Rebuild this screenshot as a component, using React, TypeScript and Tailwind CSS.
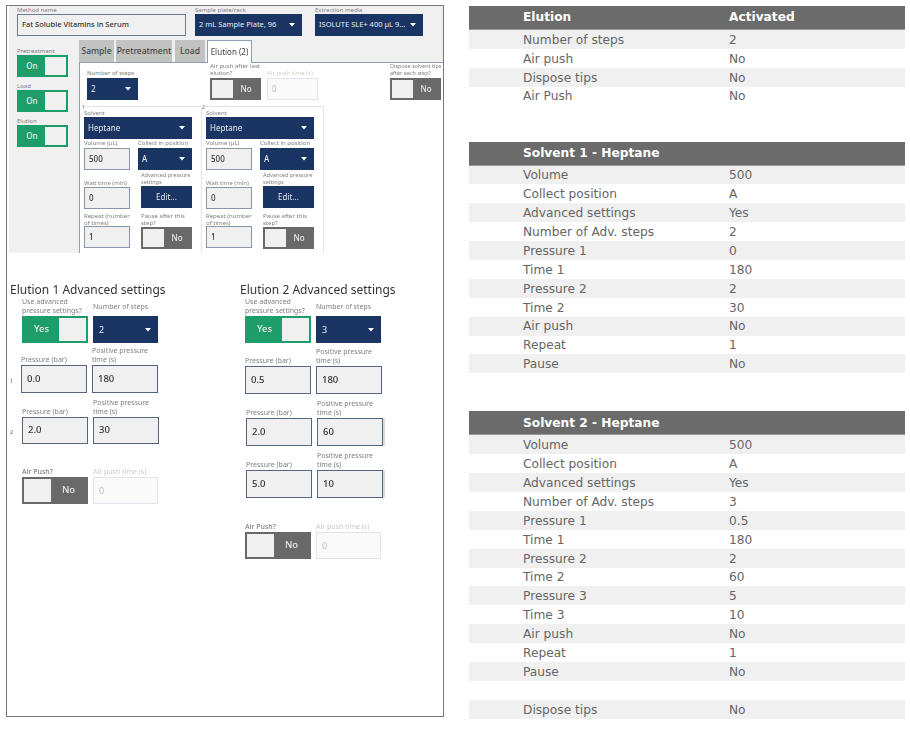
import React from "react";

const Caret = () => (
  <svg width="6" height="4" viewBox="0 0 6 4" className="shrink-0">
    <polygon points="0,0 6,0 3,3.5" fill="#ffffff" />
  </svg>
);

function Label({ children, className = "" }: { children: React.ReactNode; className?: string }) {
  return <div className={"text-[6px] leading-[7px] text-[#808080] " + className}>{children}</div>;
}

function Select({ text, className = "", textClass = "text-[8px]" }: { text: string; className?: string; textClass?: string }) {
  return (
    <div className={"flex items-center justify-between bg-[#1a3563] text-[#e8edf3] pl-[4px] pr-[7px] " + textClass + " " + className}>
      <span className="whitespace-nowrap">{text}</span>
      <Caret />
    </div>
  );
}

function Toggle({ on, text, big = false }: { on: boolean; text: string; big?: boolean }) {
  const size = big ? "w-[66px] h-[27px] p-[2px] text-[9.5px]" : "w-[51px] h-[22px] p-[2px] text-[8px]";
  const knob = big ? "w-[27px] h-[23px]" : "w-[21px] h-[18px]";
  const color = on ? "bg-[#1d9d69] flex-row-reverse" : "bg-[#696969]";
  return (
    <div className={"flex items-center font-medium text-[#e6eeea] " + size + " " + color}>
      <div className={"bg-[#f0f0f0] " + knob} />
      <div className="flex-1 text-center">{text}</div>
    </div>
  );
}

function Input({ value, className = "", size = "text-[8px] pl-[4px] w-[46px] h-[22px] border-[#8796a8]" }: { value: string; className?: string; size?: string }) {
  return (
    <div className={"flex items-center bg-[#f0f0f0] border text-[#333333] font-medium " + size + " " + className}>{value}</div>
  );
}

function Disabled({ big = false }: { big?: boolean }) {
  return (
    <div className={"flex items-center border border-[#dfe5ea] bg-[#fafafa] text-[#bdbdbd] " + (big ? "w-[65px] h-[27px] pl-[5px] text-[9px]" : "w-[51px] h-[22px] pl-[4px] text-[8px]")}>
      0
    </div>
  );
}

function Step({ n, className }: { n: string; className: string }) {
  return (
    <div className={"relative pl-[2px] " + className}>
      <div className="absolute left-0 top-[-3px] text-[5px] leading-[6px] text-[#777777]">{n}</div>
      <Label className="mt-[2px] h-[8px] !leading-[8px]">Solvent</Label>
      <Select text="Heptane" className="w-[108px] h-[22px]" />
      <div className="flex">
        <div className="w-[46px]">
          <Label className="h-[9px] !leading-[8px]">Volume (µL)</Label>
          <Input value="500" />
        </div>
        <div className="ml-[8px] w-[54px]">
          <Label className="h-[9px] !leading-[8px]">Collect in position</Label>
          <Select text="A" className="w-[54px] h-[22px]" textClass="text-[8px] font-medium" />
        </div>
      </div>
      <div className="flex">
        <div className="w-[46px] pt-[9px]">
          <Label className="h-[8px] !leading-[8px]">Wait time (min)</Label>
          <Input value="0" />
        </div>
        <div className="ml-[11px] w-[51px] pt-[2px]">
          <Label className="h-[14px] whitespace-nowrap !text-[5.5px]">Advanced pressure<br />settings</Label>
          <div className="w-[51px] h-[22px] bg-[#1a3563] text-[#dfe5ec] text-[8px] flex items-center justify-center">Edit...</div>
        </div>
      </div>
      <div className="flex">
        <div className="w-[46px] pt-[4px]">
          <Label className="h-[13px] !leading-[6.5px]">Repeat (number of times)</Label>
          <Input value="1" />
        </div>
        <div className="ml-[11px] w-[51px] pt-[4px]">
          <Label className="h-[14px] !leading-[6.5px]">Pause after this step?</Label>
          <Toggle on={false} text="No" />
        </div>
      </div>
    </div>
  );
}

function PressureRow({ n, pressure, time, mt, numW, shade = false, tall = true }: { n: string; pressure: string; time: string; mt: string; numW: string; shade?: boolean; tall?: boolean }) {
  const input = (tall ? "h-[28px] " : "h-[27px] ") + "w-[66px] pl-[5px] text-[9.5px] border-[#54657d]";
  return (
    <div className={"flex items-end " + mt}>
      <div className={"text-[5.5px] leading-[6px] text-[#666666] pb-[9px] " + numW}>{n}</div>
      <div className="w-[66px]">
        <Label className="!text-[7px] !leading-[8px] pb-[1px]">Pressure (bar)</Label>
        <Input value={pressure} size={input} />
      </div>
      <div className="w-[66px] ml-[5px]">
        <Label className="!text-[7px] !leading-[8.5px] w-[66px] whitespace-nowrap pb-[1px]">Positive pressure<br />time (s)</Label>
        <Input value={time} size={input} className={shade ? "shadow-[2px_0_0_#d5dbe3]" : ""} />
      </div>
    </div>
  );
}

function Advanced({ title, steps, rows, airMt, className, left }: { title: string; steps: string; rows: React.ReactNode; airMt: string; className: string; left: string }) {
  return (
    <div className={className}>
      <div className="text-[12px] leading-[16px] text-[#333333] whitespace-nowrap">{title}</div>
      <div className={"flex items-end " + left}>
        <div className="w-[66px]">
          <Label className="!text-[7px] !leading-[8.5px] whitespace-nowrap pb-[1px]">Use advanced<br />pressure settings?</Label>
          <Toggle on text="Yes" big />
        </div>
        <div className="ml-[5px] w-[65px]">
          <Label className="!text-[7px] !leading-[8px] pb-[5px]">Number of steps</Label>
          <Select text={steps} className="w-[65px] h-[27px]" textClass="text-[9px] !pl-[6px]" />
        </div>
      </div>
      {rows}
      <div className={"flex items-end " + left + " " + airMt}>
        <div className="w-[66px]">
          <Label className="!text-[7px] !leading-[8px] pb-[1px] font-medium">Air Push?</Label>
          <Toggle on={false} text="No" big />
        </div>
        <div className="ml-[5px] w-[65px]">
          <Label className="!text-[7px] !leading-[8px] pb-[1px] !text-[#c9c9c9]">Air push time (s)</Label>
          <Disabled big />
        </div>
      </div>
    </div>
  );
}

function Tab({ text, className }: { text: string; className: string }) {
  return <div className={"h-[22px] flex items-center justify-center text-[8.5px] font-medium text-[#444444] bg-[#c2c2c2] " + className}>{text}</div>;
}

function LeftPanel() {
  return (
    <div className="w-[438px] h-[712px] mt-[5px] ml-[6px] border border-[#777777] shrink-0" style={{ fontFamily: '"Noto Sans", sans-serif' }}>
      <div className="blur-[0.3px]">
        <div className="ml-[2px] h-[247px] bg-[#f0f0f0] flex flex-col">
          <div className="flex pl-[8px]">
            <div className="w-[169px]">
              <Label className="h-[8px] !leading-[8px]">Method name</Label>
              <div className="h-[22px] border border-[#6d7d90] flex items-center pl-[4px] text-[7.5px] font-medium text-[#333333]">Fat Soluble Vitamins in Serum</div>
            </div>
            <div className="w-[107px] ml-[9px]">
              <Label className="h-[8px] !leading-[8px]">Sample plate/rack</Label>
              <Select text="2 mL Sample Plate, 96" className="h-[22px]" textClass="text-[7.5px]" />
            </div>
            <div className="w-[108px] ml-[13px]">
              <Label className="h-[8px] !leading-[8px]">Extraction media</Label>
              <Select text="ISOLUTE SLE+ 400 µL 9..." className="h-[22px]" textClass="text-[7.5px]" />
            </div>
          </div>
          <div className="flex flex-1 mt-[4px]">
            <div className="w-[70px] pl-[8px] pt-[7px] shrink-0">
              <Label className="h-[8px] !leading-[8px]">Pretreatment</Label>
              <Toggle on text="On" />
              <Label className="h-[8px] !leading-[8px] mt-[5px]">Load</Label>
              <Toggle on text="On" />
              <Label className="h-[8px] !leading-[8px] mt-[5px]">Elution</Label>
              <Toggle on text="On" />
            </div>
            <div className="flex-1 flex flex-col">
              <div className="flex h-[22px]">
                <Tab text="Sample" className="w-[35px]" />
                <Tab text="Pretreatment" className="w-[56px] ml-[2px]" />
                <Tab text="Load" className="w-[30px] ml-[3px]" />
                <div className="relative z-10 w-[45px] h-[23px] ml-[2px] bg-white border border-b-0 border-[#8fa0b4] flex items-center justify-center text-[8px] text-[#444444]">Elution (2)</div>
              </div>
              <div className="flex-1 bg-white border-l border-t border-[#8fa0b4]">
                <div className="flex items-end pl-[7px] h-[37px]">
                  <div className="w-[51px]">
                    <Label className="pb-[1px]">Number of steps</Label>
                    <Select text="2" className="h-[22px]" />
                  </div>
                  <div className="w-[51px] ml-[72px]">
                    <Label className="pb-[1px]">Air push after last elution?</Label>
                    <Toggle on={false} text="No" />
                  </div>
                  <div className="w-[51px] ml-[6px]">
                    <Label className="pb-[1px] !text-[#cfcfcf]">Air push time (s)</Label>
                    <Disabled />
                  </div>
                  <div className="w-[51px] ml-[72px]">
                    <Label className="pb-[1px] whitespace-nowrap !text-[5.5px]">Dispose solvent tips<br />after each step?</Label>
                    <Toggle on={false} text="No" />
                  </div>
                </div>
                <div className="flex mt-[6px] ml-[2px] w-[242px] h-[147px] border-t border-r border-[#e2e6ea]">
                  <Step n="1" className="w-[119px]" />
                  <Step n="2" className="flex-1 border-l border-[#e2e6ea] pl-[4px]" />
                </div>
              </div>
            </div>
          </div>
        </div>
        <div className="flex mt-[29px] pl-[3px]">
          <Advanced
            title="Elution 1 Advanced settings"
            steps="2"
            left="ml-[12px]"
            className="w-[230px]"
            airMt="mt-[24px]"
            rows={
              <>
                <PressureRow n="1" pressure="0.0" time="180" mt="mt-[4px]" numW="w-[11px]" />
                <PressureRow n="2" pressure="2.0" time="30" mt="mt-[6px]" numW="w-[12px]" tall={false} />
              </>
            }
          />
          <Advanced
            title="Elution 2 Advanced settings"
            steps="3"
            left="ml-[5px]"
            className="w-[170px]"
            airMt="mt-[25px]"
            rows={
              <>
                <PressureRow n="" pressure="0.5" time="180" mt="mt-[5px]" numW="w-[5px]" />
                <PressureRow n="" pressure="2.0" time="60" mt="mt-[6px]" numW="w-[6px]" shade />
                <PressureRow n="" pressure="5.0" time="10" mt="mt-[6px]" numW="w-[6px]" shade />
              </>
            }
          />
        </div>
      </div>
    </div>
  );
}

function Section({ head, second, rows, className = "" }: { head: string; second?: string; rows: [string, string][]; className?: string }) {
  return (
    <div className={className}>
      <div className="h-[24px] flex items-center bg-[#6b6b6b] border-b border-[#999999] text-white font-bold text-[12.2px]">
        <div className="w-[260px] pl-[54px] shrink-0 whitespace-nowrap">{head}</div>
        <div>{second}</div>
      </div>
      {rows.map(([a, b], i) => (
        <div key={i} className={"h-[18.9px] pt-[1px] flex items-center text-[12.2px] text-[#666666] " + (i % 2 === 0 ? "bg-[#f0f0f0]" : "bg-white")}>
          <div className="w-[260px] pl-[54px] shrink-0 whitespace-nowrap">{a}</div>
          <div>{b}</div>
        </div>
      ))}
    </div>
  );
}

export default function App() {
  return (
    <div className="w-[910px] h-[730px] bg-white flex overflow-hidden">
      <LeftPanel />
      <div className="w-[436px] ml-[25px] pt-[6px] shrink-0" style={{ fontFamily: '"DejaVu Sans", sans-serif' }}>
        <Section
          head="Elution"
          second="Activated"
          rows={[
            ["Number of steps", "2"],
            ["Air push", "No"],
            ["Dispose tips", "No"],
            ["Air Push", "No"],
          ]}
        />
        <Section
          className="mt-[36px]"
          head="Solvent 1 - Heptane"
          rows={[
            ["Volume", "500"],
            ["Collect position", "A"],
            ["Advanced settings", "Yes"],
            ["Number of Adv. steps", "2"],
            ["Pressure 1", "0"],
            ["Time 1", "180"],
            ["Pressure 2", "2"],
            ["Time 2", "30"],
            ["Air push", "No"],
            ["Repeat", "1"],
            ["Pause", "No"],
          ]}
        />
        <Section
          className="mt-[38px]"
          head="Solvent 2 - Heptane"
          rows={[
            ["Volume", "500"],
            ["Collect position", "A"],
            ["Advanced settings", "Yes"],
            ["Number of Adv. steps", "3"],
            ["Pressure 1", "0.5"],
            ["Time 1", "180"],
            ["Pressure 2", "2"],
            ["Time 2", "60"],
            ["Pressure 3", "5"],
            ["Time 3", "10"],
            ["Air push", "No"],
            ["Repeat", "1"],
            ["Pause", "No"],
            ["", ""],
            ["Dispose tips", "No"],
          ]}
        />
      </div>
    </div>
  );
}
